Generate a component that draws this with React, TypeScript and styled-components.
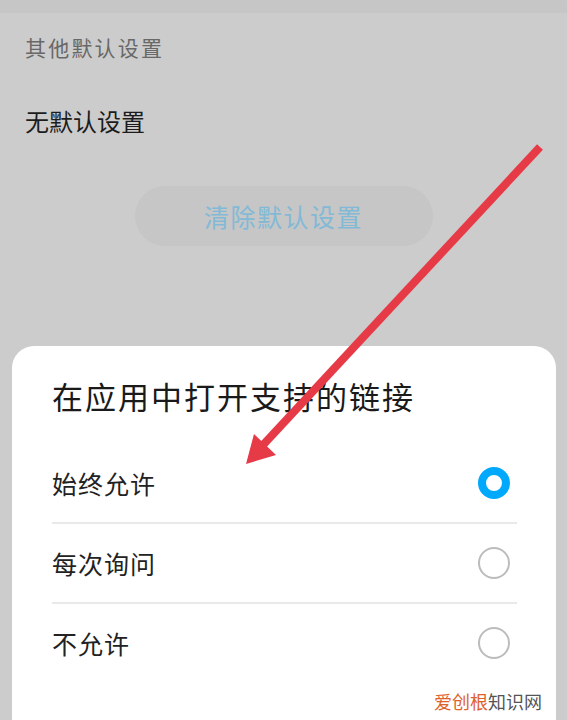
import React from "react";
import styled, { createGlobalStyle } from "styled-components";

const Global = createGlobalStyle`
  html, body { margin: 0; padding: 0; }
  body {
    background: #cccccc;
    font-family: "Noto Sans CJK SC", "Noto Sans", sans-serif;
    overflow: hidden;
  }
`;

const Page = styled.div`
  position: relative;
  width: 567px;
  height: 720px;
  overflow: hidden;
  background: #cccccc;
  display: flex;
  flex-direction: column;
`;

const TopStrip = styled.div`
  height: 13px;
  background: #c6c6c6;
  flex-shrink: 0;
`;

const Section = styled.div`
  display: flex;
  flex-direction: column;
  padding: 0 25px;
`;

const Label = styled.div`
  margin-top: 20px;
  font-size: 21px;
  line-height: 28px;
  letter-spacing: 2.2px;
  color: #686868;
`;

const Value = styled.div`
  margin-top: 43px;
  font-size: 24px;
  line-height: 34px;
  color: #1c1c1c;
`;

const ClearButton = styled.div`
  align-self: center;
  margin-top: 48px;
  margin-left: -25px;
  margin-right: -25px;
  width: 298px;
  height: 60px;
  border-radius: 30px;
  background: #c6c6c6;
  display: flex;
  align-items: center;
  justify-content: center;
  font-size: 25px;
  letter-spacing: 1.5px;
  color: #82b9d6;
`;

const Sheet = styled.div`
  margin: 100px 11px 0 12px;
  flex: 1;
  background: #ffffff;
  border-radius: 22px 22px 0 0;
  padding: 30px 39px 0 40px;
  display: flex;
  flex-direction: column;
`;

const Title = styled.div`
  font-size: 31px;
  line-height: 40px;
  letter-spacing: 2px;
  color: #1a1a1a;
  margin-bottom: 28px;
`;

const Row = styled.div<{ $last?: boolean }>`
  height: 78px;
  display: flex;
  align-items: center;
  justify-content: space-between;
  padding-right: 7px;
  border-bottom: ${(p) => (p.$last ? "none" : "2px solid #e9e9e9")};
`;

const RowText = styled.span`
  font-size: 25px;
  letter-spacing: 1px;
  color: #222222;
`;

const Radio = styled.span<{ $on?: boolean }>`
  box-sizing: border-box;
  width: 32px;
  height: 32px;
  border-radius: 50%;
  border: ${(p) => (p.$on ? "8px solid #00a9fb" : "2px solid #bcbcbc")};
  background: #ffffff;
`;

const Watermark = styled.div`
  position: absolute;
  left: 434px;
  top: 689px;
  font-size: 18px;
  line-height: 24px;
  color: #555555;
  white-space: nowrap;
`;

const Accent = styled.span`
  color: #e0622b;
`;

const ArrowLayer = styled.svg`
  position: absolute;
  left: 0;
  top: 0;
  pointer-events: none;
`;

const options = [
  { text: "始终允许", on: true },
  { text: "每次询问", on: false },
  { text: "不允许", on: false },
];

export default function App() {
  return (
    <>
      <Global />
      <Page>
        <TopStrip />
        <Section>
          <Label>其他默认设置</Label>
          <Value>无默认设置</Value>
          <ClearButton>清除默认设置</ClearButton>
        </Section>
        <Sheet>
          <Title>在应用中打开支持的链接</Title>
          {options.map((o, i) => (
            <Row key={o.text} $last={i === options.length - 1}>
              <RowText>{o.text}</RowText>
              <Radio $on={o.on} />
            </Row>
          ))}
        </Sheet>
        <Watermark>
          <Accent>爱创根</Accent>知识网
        </Watermark>
        <ArrowLayer width="567" height="720" viewBox="0 0 567 720">
          <line x1="540" y1="147" x2="263" y2="445" stroke="#e63a47" strokeWidth="8" />
          <polygon points="246,464 254,434 276,455" fill="#e63a47" />
        </ArrowLayer>
      </Page>
    </>
  );
}
